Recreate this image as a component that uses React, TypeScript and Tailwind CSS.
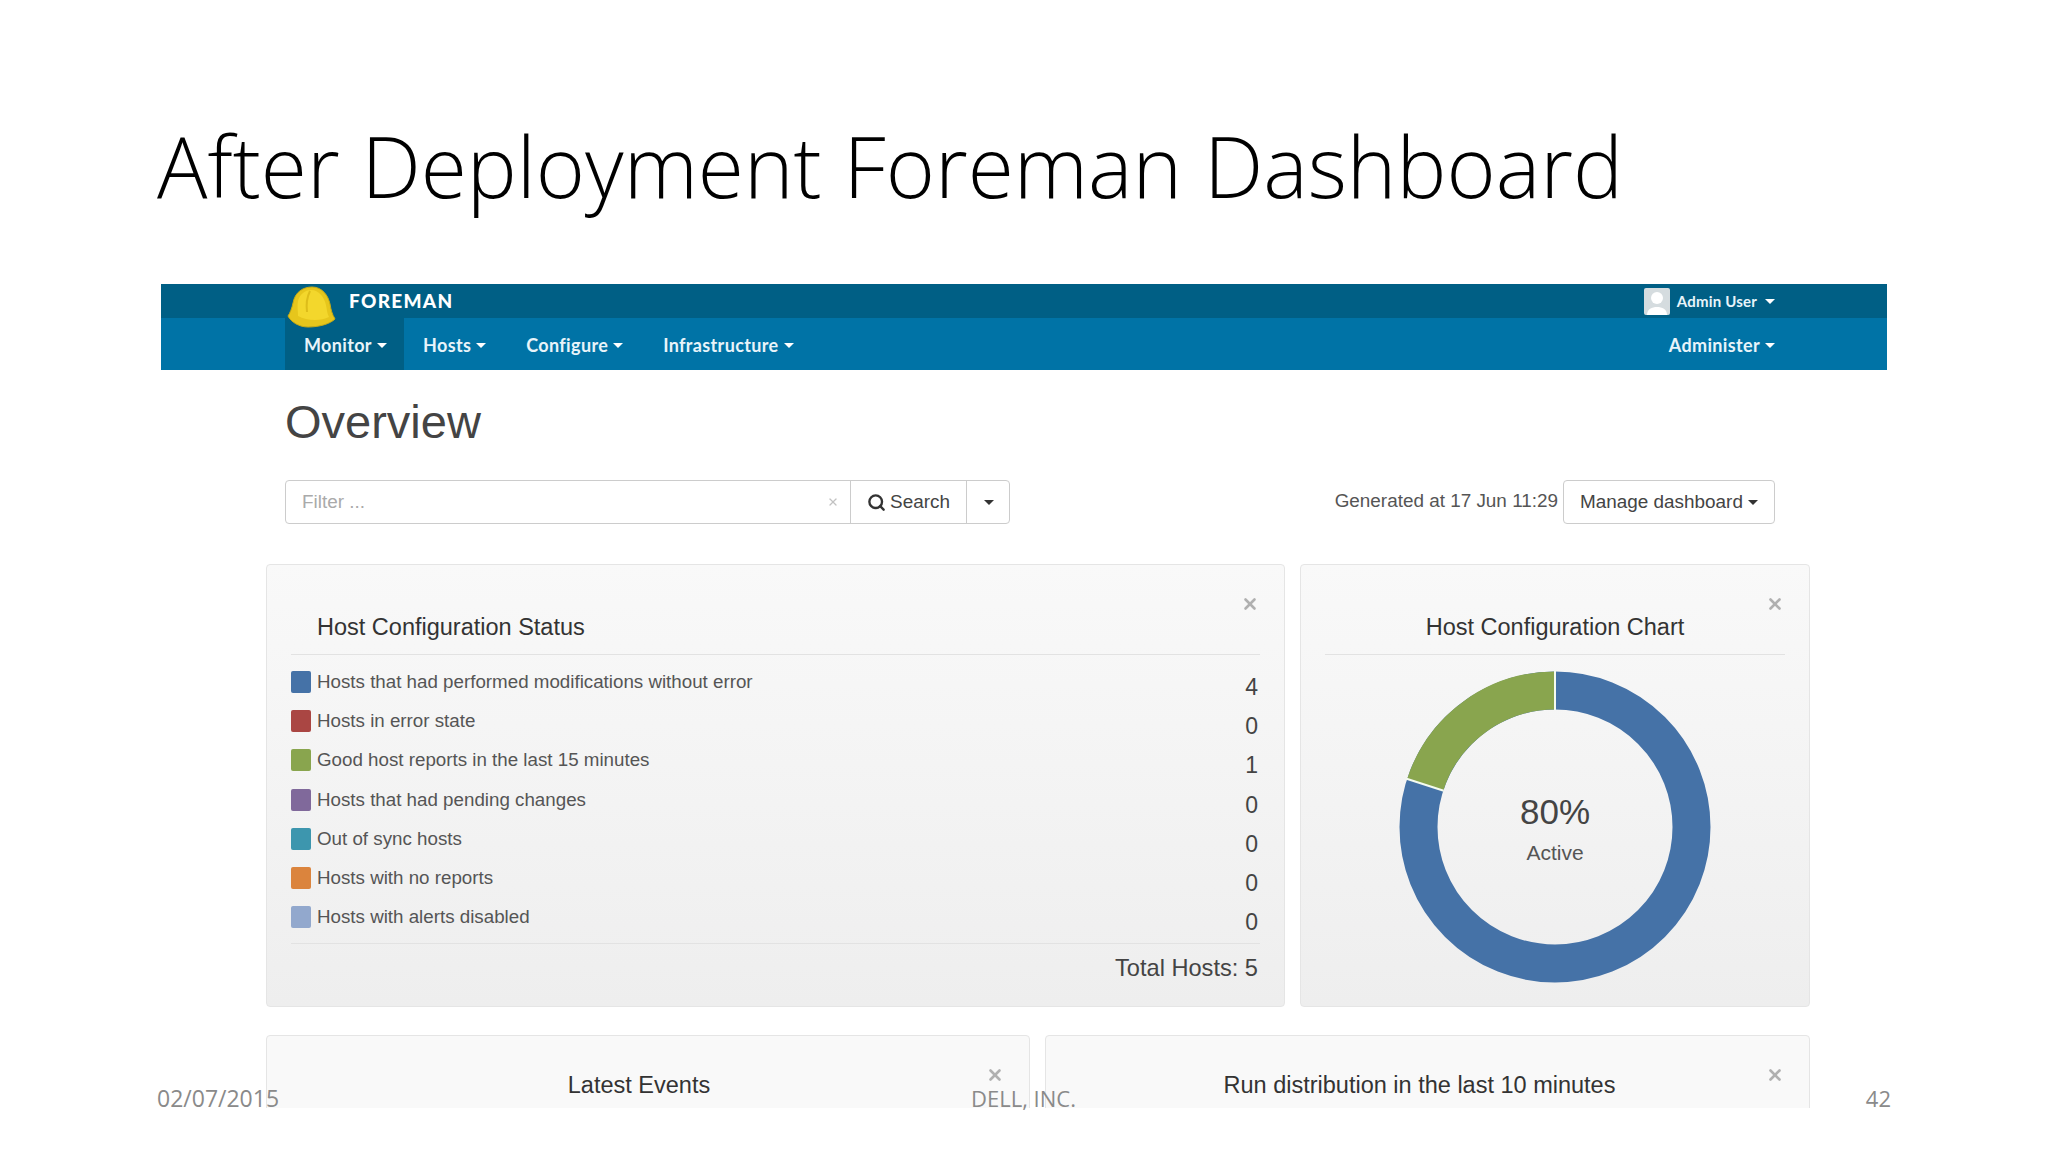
import React from "react";
import { Search, X } from "lucide-react";

type LegendRow = {
  label: string;
  color: string;
  value: number;
};

const legendRows: LegendRow[] = [
  { label: "Hosts that had performed modifications without error", color: "bg-[#4572a7]", value: 4 },
  { label: "Hosts in error state", color: "bg-[#aa4643]", value: 0 },
  { label: "Good host reports in the last 15 minutes", color: "bg-[#89a54e]", value: 1 },
  { label: "Hosts that had pending changes", color: "bg-[#80699b]", value: 0 },
  { label: "Out of sync hosts", color: "bg-[#3d96ae]", value: 0 },
  { label: "Hosts with no reports", color: "bg-[#db843d]", value: 0 },
  { label: "Hosts with alerts disabled", color: "bg-[#92a8cd]", value: 0 },
];

const navItems = ["Hosts", "Configure", "Infrastructure"];

const Caret: React.FC<{ className?: string }> = ({ className }) => (
  <span
    className={`ml-[5px] inline-block h-0 w-0 border-x-[5px] border-t-[5px] border-x-transparent align-middle ${className ?? "border-t-white"}`}
  />
);

const HardHat: React.FC = () => (
  <svg viewBox="0 0 50 42" className="absolute left-[125px] top-[2px] h-[42px] w-[50px]">
    <path
      d="M2 30C4 27 6 22 7 17 9 6 17 1 26 1c10 0 16 8 18 17 1 6 2 10 5 15-5 5-16 8-27 8C13 41 5 36 2 30z"
      fill="#e6c61c"
      stroke="#c8ab14"
      strokeWidth="1"
    />
    <path d="M12 15c2-7 7-11 13-11 8 0 13 7 15 15 1 5 1 8 3 12-8 4-22 4-31-1 0-5-1-10 0-15z" fill="#f3d72c" />
    <path d="M24 5c-3 6-4 13-3 21" stroke="#ddbd1a" strokeWidth="2" fill="none" />
  </svg>
);

const CloseMark: React.FC = () => (
  <X className="absolute right-[25px] top-[30px] h-[18px] w-[18px] text-[#b0b0b0]" strokeWidth={3.5} />
);

const Donut: React.FC = () => (
  <svg viewBox="0 0 320 320" className="h-[320px] w-[320px]">
    <g transform="rotate(-90 160 160)">
      <circle cx="160" cy="160" r="136.5" fill="none" stroke="#4572a7" strokeWidth="38" />
      <circle
        cx="160"
        cy="160"
        r="136.5"
        fill="none"
        stroke="#89a54e"
        strokeWidth="38"
        strokeDasharray="171.5 686.1"
        strokeDashoffset="-686.1"
      />
    </g>
    <line x1="160" y1="3" x2="160" y2="43" stroke="#f4fbf0" strokeWidth="2" />
    <line x1="11.6" y1="111.8" x2="48.7" y2="123.8" stroke="#f4fbf0" strokeWidth="2" />
  </svg>
);

const App: React.FC = () => {
  return (
    <div className="relative h-[1152px] w-[2048px] overflow-hidden bg-white font-['Liberation_Sans',sans-serif]">
      <h1 className="h-[284px] pl-[157px] pt-[114px] font-['Open_Sans',sans-serif] text-[84px] font-light leading-[104px] text-black">
        After Deployment Foreman Dashboard
      </h1>

      <div className="ml-[161px] h-[824px] w-[1726px] overflow-hidden bg-white">
        <nav className="relative font-['Lato',sans-serif] font-bold text-[#e8f4fa]">
          <HardHat />
          <div className="flex h-[34px] items-center justify-between bg-[#005f85] pl-[188px] pr-[112px]">
            <span className="text-[19px] font-black tracking-[1.3px] text-white">FOREMAN</span>
            <div className="flex items-center pt-[1px] text-[15px] tracking-[0.2px]">
              <span className="mr-[7px] flex h-[27px] w-[26px] items-end justify-center rounded-[2px] bg-[#d5dcdf]">
                <svg viewBox="0 0 26 27" className="h-[27px] w-[26px]">
                  <circle cx="13" cy="10" r="6" fill="#fff" />
                  <path d="M3 27c0-6 5-8 10-8s10 2 10 8z" fill="#fff" />
                </svg>
              </span>
              Admin User
              <Caret className="ml-[8px] border-t-white" />
            </div>
          </div>
          <div className="flex h-[52px] items-center justify-between bg-[#0073a6] pl-[124px] pr-[112px] text-[18px] tracking-[0.35px]">
            <div className="flex h-full items-center">
              <span className="flex h-full w-[119px] items-center bg-[#005f85] pl-[19px] pt-[2px]">
                Monitor
                <Caret />
              </span>
              {navItems.map((item) => (
                <span key={item} className="flex items-center pl-[19px] pr-[21px] pt-[2px]">
                  {item}
                  <Caret />
                </span>
              ))}
            </div>
            <span className="flex items-center pt-[2px]">
              Administer
              <Caret />
            </span>
          </div>
        </nav>

        <h2 className="pl-[124px] pt-[24px] text-[47px] font-normal leading-[56px] text-[#444]">Overview</h2>

        <div className="mt-[30px] flex h-[44px] items-center justify-between pl-[124px] pr-[112px] text-[18.9px] text-[#555]">
          <div className="flex h-full w-[725px] rounded-[4px] border border-[#ccc] bg-white">
            <div className="flex flex-1 items-center justify-between pl-[16px] pr-[11px] text-[#aaa]">
              Filter ...
              <X className="h-[12px] w-[12px] text-[#c2c2c2]" strokeWidth={2.5} />
            </div>
            <div className="flex w-[116px] items-center justify-center border-l border-[#ccc] text-[#444]">
              <Search className="mr-[4px] h-[19px] w-[19px] text-[#333]" strokeWidth={3} />
              Search
            </div>
            <div className="flex w-[43px] items-center justify-center border-l border-[#ccc] pr-[4px]">
              <Caret className="ml-0 border-t-[#333]" />
            </div>
          </div>
          <div className="flex h-full items-center">
            <span className="mb-[2px] mr-[5px] text-[#555]">Generated at 17 Jun 11:29</span>
            <div className="flex h-full w-[212px] items-center justify-center rounded-[4px] border border-[#ccc] bg-white text-[#444]">
              Manage dashboard
              <Caret className="border-t-[#333]" />
            </div>
          </div>
        </div>

        <div className="mt-[40px] flex gap-[15px] pl-[105px]">
          <section className="relative h-[443px] w-[1019px] rounded-[4px] border border-[#e5e5e5] bg-gradient-to-b from-[#f9f9f9] to-[#eeeeee] px-[24px]">
            <CloseMark />
            <h3 className="h-[90px] border-b border-[#e2e2e2] pl-[26px] pt-[48px] text-[23.5px] font-normal leading-[28px] text-[#333]">
              Host Configuration Status
            </h3>
            <ul className="mt-[8px] border-b border-[#e2e2e2] pb-[6px]">
              {legendRows.map((row) => (
                <li key={row.label} className="flex h-[39.2px] justify-between pr-[2px]">
                  <div className="flex h-[38px] items-center text-[18.75px] text-[#555]">
                    <span className={`mr-[6px] h-[22px] w-[20px] rounded-[2px] ${row.color}`} />
                    {row.label}
                  </div>
                  <span className="pt-[10px] text-[23px] leading-[28px] text-[#444]">{row.value}</span>
                </li>
              ))}
            </ul>
            <p className="pr-[2px] pt-[10px] text-right text-[23.6px] leading-[28px] text-[#444]">Total Hosts: 5</p>
          </section>

          <section className="relative h-[443px] w-[510px] rounded-[4px] border border-[#e5e5e5] bg-gradient-to-b from-[#f9f9f9] to-[#eeeeee] px-[24px]">
            <CloseMark />
            <h3 className="h-[90px] border-b border-[#e2e2e2] pt-[48px] text-center text-[23.5px] font-normal leading-[28px] text-[#333]">
              Host Configuration Chart
            </h3>
            <div className="relative mt-[12px] flex justify-center">
              <Donut />
              <div className="absolute inset-x-0 top-[123px] text-center">
                <p className="text-[35px] leading-[44px] text-[#444]">80%</p>
                <p className="text-[21px] leading-[38px] text-[#555]">Active</p>
              </div>
            </div>
          </section>
        </div>

        <div className="mt-[28px] flex gap-[15px] pl-[105px]">
          <section className="relative h-[120px] w-[764px] rounded-[4px] border border-[#e5e5e5] bg-[#f9f9f9] pr-[18px]">
            <CloseMark />
            <h3 className="pt-[35px] text-center text-[23.5px] font-normal leading-[28px] text-[#333]">Latest Events</h3>
          </section>
          <section className="relative h-[120px] w-[765px] rounded-[4px] border border-[#e5e5e5] bg-[#f9f9f9] pr-[16px]">
            <CloseMark />
            <h3 className="pt-[35px] text-center text-[23.5px] font-normal leading-[28px] text-[#333]">
              Run distribution in the last 10 minutes
            </h3>
          </section>
        </div>
      </div>

      <footer className="absolute inset-x-[157px] top-[1084px] flex justify-between font-['Open_Sans',sans-serif] text-[23px] leading-[28px] text-[#8a8a8a]">
        <span>02/07/2015</span>
        <span className="absolute left-[814px] text-[22px]">DELL, INC.</span>
        <span className="text-[22px]">42</span>
      </footer>
    </div>
  );
};

export default App;
